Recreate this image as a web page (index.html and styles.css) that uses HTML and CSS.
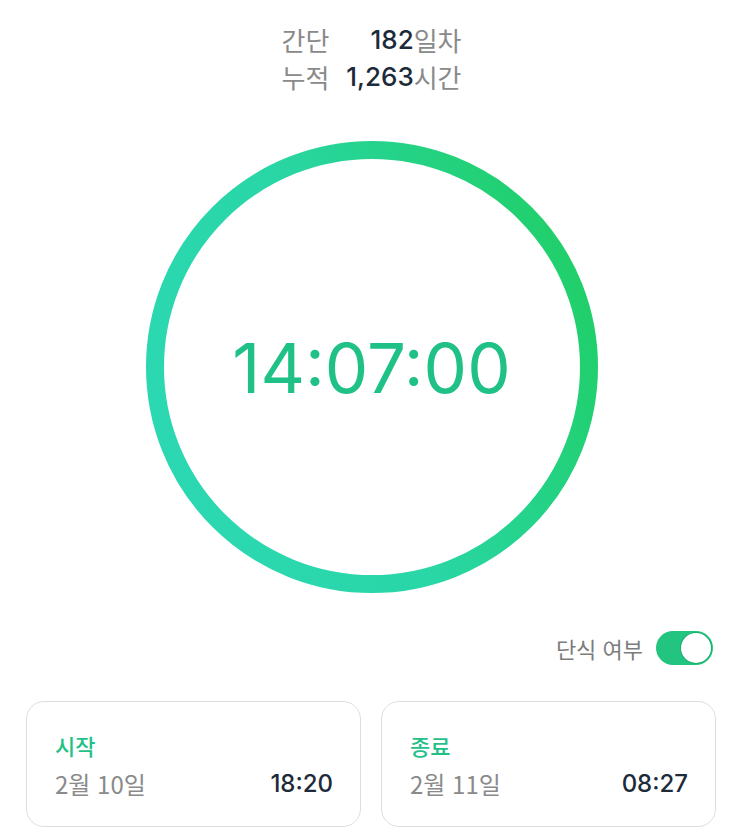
FILE: index.html
```html
<!DOCTYPE html>
<html lang="ko">
<head>
<meta charset="UTF-8">
<meta name="viewport" content="width=device-width, initial-scale=1.0">
<title>단식 타이머</title>
<link rel="stylesheet" href="styles.css">
</head>
<body>

<!-- Summary -->
<div class="stats">
  <span class="label">간단</span><span class="num">182</span><span class="unit">일차</span>
  <span class="label">누적</span><span class="num">1,263</span><span class="unit">시간</span>
</div>

<!-- Timer ring -->
<div class="ring">
  <svg class="ring-svg" viewBox="0 0 452 452" width="452" height="452">
    <defs>
      <linearGradient id="ringGrad" x1="0" y1="0.7" x2="1" y2="0.3">
        <stop offset="0" stop-color="#2cd8b2"/>
        <stop offset="0.45" stop-color="#29d6a6"/>
        <stop offset="1" stop-color="#20cf68"/>
      </linearGradient>
    </defs>
    <circle cx="226" cy="226" r="217" fill="none" stroke="url(#ringGrad)" stroke-width="18"/>
  </svg>
  <div class="time">14:07:00</div>
</div>

<!-- Fasting toggle -->
<div class="fast-row">
  <span class="fast-label">단식 여부</span>
  <span class="toggle on"><span class="knob"></span></span>
</div>

<!-- Start / end -->
<div class="cards">
  <div class="card">
    <div class="card-title">시작</div>
    <div class="card-row"><span class="date">2월 10일</span><span class="clock">18:20</span></div>
  </div>
  <div class="card">
    <div class="card-title">종료</div>
    <div class="card-row"><span class="date">2월 11일</span><span class="clock">08:27</span></div>
  </div>
</div>

</body>
</html>
```

FILE: styles.css
```css
:root { --green:#1fc187; --toggle:#22c47f; --gray:#8a8a8a; --dark:#1d2a3a; --line:#dedede; }
body{margin:0;background:#fff;font-family:Inter,"Noto Sans CJK KR",sans-serif;color:var(--dark);width:743px;}

.stats{display:grid;grid-template-columns:auto auto auto;justify-content:center;margin:21px 0 0;font-size:26px;line-height:37px;}
.stats .label,.stats .unit{font-family:"Noto Sans CJK KR",sans-serif;font-size:26px;color:var(--gray);}
.stats .label{padding-right:17px;}
.stats .num{font-weight:500;text-align:right;color:var(--dark);}

.ring{display:grid;place-items:center;width:452px;height:452px;margin:46px auto 0;}
.ring-svg,.ring .time{grid-area:1/1;}
.ring .time{font-size:69px;font-weight:400;color:var(--green);margin-top:1px;}

.fast-row{display:flex;justify-content:flex-end;align-items:center;gap:13px;padding-right:30px;margin-top:38px;}
.fast-label{font-family:"Noto Sans CJK KR",sans-serif;font-size:22px;color:#7c7c7c;}
.toggle{display:flex;align-items:center;justify-content:flex-end;width:57px;height:34px;border-radius:17px;background:var(--toggle);padding:2px;box-sizing:border-box;}
.toggle .knob{width:30px;height:30px;border-radius:50%;background:#fff;box-shadow:0 0 0 1px #1cae70;}

.cards{display:grid;grid-template-columns:1fr 1fr;gap:20px;padding:0 27px 0 26px;margin-top:36px;}
.card{border:1.5px solid var(--line);border-radius:18px;padding:28px 27px 26px 28px;height:126px;box-sizing:border-box;}
.card-title{font-family:"Noto Sans CJK KR",sans-serif;font-size:22px;font-weight:500;color:var(--green);line-height:30px;}
.card-row{display:flex;justify-content:space-between;align-items:center;margin-top:8px;line-height:32px;}
.card-row .date{font-family:"Noto Sans CJK KR",sans-serif;font-size:24px;color:var(--gray);}
.card-row .clock{font-size:24px;font-weight:500;color:var(--dark);}
```
